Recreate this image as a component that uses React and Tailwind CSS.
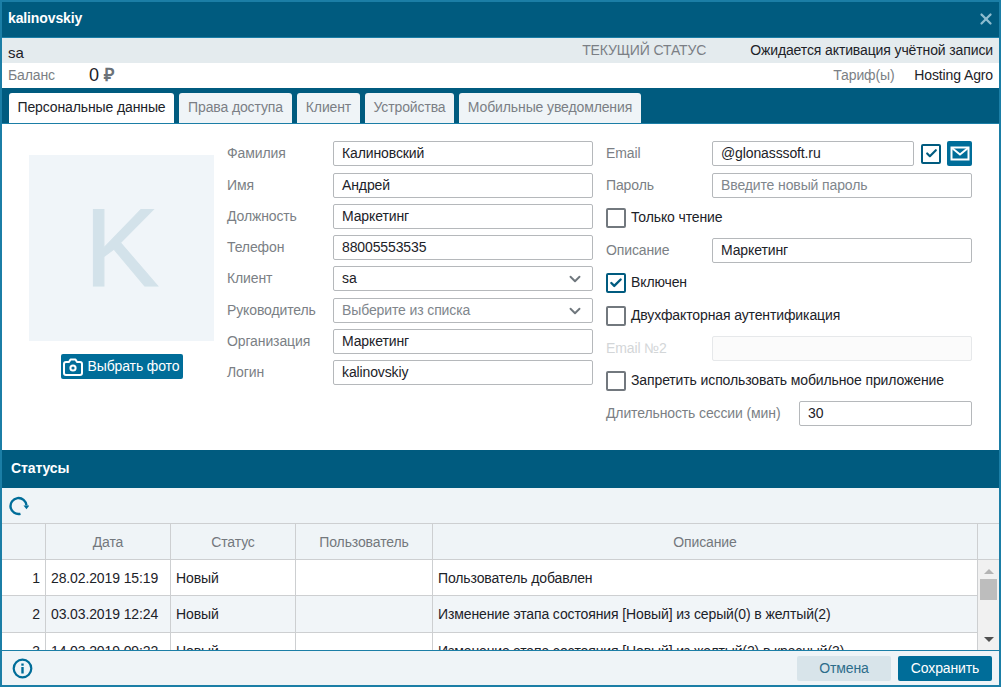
import React from "react";
import { Check, ChevronDown, X } from "lucide-react";

function Field({ label, value, placeholder, select, className = "", labelClass = "w-[106px]" }) {
  return (
    <div className={`flex items-center h-[25px] ${className}`}>
      <span className={`${labelClass} shrink-0 pb-[2px] text-[#7b7f85]`}>{label}</span>
      <div className="flex-1 h-[25px] border border-[#b5b8bb] rounded-[2px] bg-white flex items-center pl-2 pr-[8px] justify-between">
        <span className={`pb-[2px] ${value ? "text-[#1c2228]" : "text-[#80868c]"}`}>{value || placeholder}</span>
        {select && <ChevronDown size={18} strokeWidth={2.5} className="text-[#6f777d]" />}
      </div>
    </div>
  );
}

function Box({ checked, label, className = "" }) {
  return (
    <div className={`flex items-center gap-[5px] h-[20px] ${className}`}>
      <span className={`w-[20px] h-[20px] rounded-[2px] border-2 flex items-center justify-center ${checked ? "border-[#005b7f]" : "border-[#72787e]"}`}>
        {checked && <Check size={14} strokeWidth={4} className="text-[#005b7f]" />}
      </span>
      <span className="text-[#1c2228] pb-[2px]">{label}</span>
    </div>
  );
}

const cols = "grid grid-cols-[44px_125px_125px_137px_545px]";

function Row({ n, date, text, alt, h }) {
  const cell = "border-r border-[#cdcfd1] flex items-center pl-[5px] text-[#1c2228]";
  return (
    <div className={`${cols} ${h} shrink-0 border-b border-[#cdcfd1] ${alt ? "bg-[#f1f5f8]" : "bg-white"}`}>
      <div className="border-r border-[#cdcfd1] flex items-center justify-end pr-[5px] text-[#1c2228]">{n}</div>
      <div className={cell}>{date}</div>
      <div className={cell}>Новый</div>
      <div className={cell}></div>
      <div className={cell}>{text}</div>
    </div>
  );
}

function Tab({ active, w, children }) {
  return (
    <div className={`h-[30px] ${w} rounded-t-[3px] flex items-center justify-center pb-[2px] ${active ? "bg-white text-[#1c2228]" : "bg-[#eff4f7] text-[#7b7f85]"}`}>
      {children}
    </div>
  );
}

export default function App() {
  const head = "border-r border-[#cdcfd1] flex items-center justify-center text-[#73787d]";
  return (
    <div className="w-[1001px] h-[687px] overflow-hidden flex flex-col bg-white border-2 border-[#1b7ea6] text-[14px] leading-none tracking-[-0.12px] font-['Liberation_Sans',Arial,sans-serif]">
      <div className="h-[35px] shrink-0 bg-[#005b7f] flex items-center justify-between pl-[6px] pr-[4px]">
        <span className="text-white font-bold pb-[4px]">kalinovskiy</span>
        <X size={18} strokeWidth={3} className="text-[#8dbccf] mb-[2px]" />
      </div>
      <div className="h-[26px] shrink-0 bg-[#e4ebee] border-t border-[#1b7ea6] flex items-center pl-[6px] pr-[6px] justify-between">
        <span className="text-[#1c2228] text-[15px] pt-[4px]">sa</span>
        <div className="flex items-center pb-[2px]">
          <span className="text-[#7b7f85] w-[168px]">ТЕКУЩИЙ СТАТУС</span>
          <span className="text-[#1c2228]">Ожидается активация учётной записи</span>
        </div>
      </div>
      <div className="h-[25px] shrink-0 bg-white flex items-center pl-[6px] pr-[6px] justify-between pb-[2px]">
        <div className="flex items-center">
          <span className="text-[#7b7f85] w-[81px]">Баланс</span>
          <span className="text-[#1c2228] text-[18px]">0</span>
          <span className="text-[#6b7278] text-[18px] ml-[5px] font-bold">₽</span>
        </div>
        <div className="flex items-center">
          <span className="text-[#7b7f85] w-[81px]">Тариф(ы)</span>
          <span className="text-[#1c2228]">Hosting Agro</span>
        </div>
      </div>
      <div className="h-[35px] shrink-0 bg-[#005b7f] flex items-end gap-[5px] pl-[7px]">
        <Tab active w="w-[165px]">Персональные данные</Tab>
        <Tab w="w-[113px]">Права доступа</Tab>
        <Tab w="w-[63px]">Клиент</Tab>
        <Tab w="w-[89px]">Устройства</Tab>
        <Tab w="w-[182px]">Мобильные уведомления</Tab>
      </div>
      <div className="h-[327px] shrink-0 border-t border-[#1b7ea6] bg-white flex pl-[27px] pt-[17px]">
        <div className="w-[185px] shrink-0 flex flex-col items-center mt-[14px]">
          <div className="w-[185px] h-[186px] bg-[#f0f5f9] flex items-center justify-center text-[#d3e2ea] text-[112px] [-webkit-text-stroke:1px_#d3e2ea]">K</div>
          <div className="mt-[13px] w-[122px] h-[25px] bg-[#006d99] rounded-[2px] flex items-center text-white pl-[2px] gap-[5px]">
            <svg width="20" height="20" viewBox="0 0 20 20" fill="none" stroke="white" strokeWidth="2" strokeLinejoin="round">
              <path d="M3 5h3l1.5-2.5h5L14 5h3a2 2 0 0 1 2 2v9a2 2 0 0 1-2 2H3a2 2 0 0 1-2-2V7a2 2 0 0 1 2-2z" />
              <circle cx="10" cy="11" r="2.6" />
            </svg>
            <span className="pb-[2px]">Выбрать фото</span>
          </div>
        </div>
        <div className="w-[366px] shrink-0 ml-[13px] flex flex-col gap-[6px]">
          <Field label="Фамилия" value="Калиновский" />
          <Field label="Имя" value="Андрей" className="mt-[1px]" />
          <Field label="Должность" value="Маркетинг" />
          <Field label="Телефон" value="88005553535" />
          <Field label="Клиент" value="sa" select />
          <Field label="Руководитель" placeholder="Выберите из списка" select className="mt-[1px]" />
          <Field label="Организация" value="Маркетинг" />
          <Field label="Логин" value="kalinovskiy" />
        </div>
        <div className="w-[366px] shrink-0 ml-[13px] flex flex-col">
          <div className="flex items-center h-[25px]">
            <span className="w-[106px] shrink-0 pb-[2px] text-[#7b7f85]">Email</span>
            <div className="w-[202px] h-[25px] border border-[#b5b8bb] rounded-[2px] flex items-center pl-2 pb-[2px] text-[#1c2228]">@glonasssoft.ru</div>
            <span className="ml-[7px] w-[20px] h-[20px] rounded-[2px] border-2 border-[#005b7f] flex items-center justify-center">
              <Check size={13} strokeWidth={4} className="text-[#005b7f]" />
            </span>
            <span className="ml-[6px] w-[25px] h-[25px] rounded-[2px] bg-[#006d99] flex items-center justify-center">
              <svg width="20" height="15" viewBox="0 0 20 15" fill="none" stroke="white" strokeWidth="2">
                <rect x="1.5" y="1.5" width="17" height="12" />
                <path d="M2 2l8 6.5L18 2" />
              </svg>
            </span>
          </div>
          <Field label="Пароль" placeholder="Введите новый пароль" className="mt-[7px]" />
          <Box label="Только чтение" className="mt-[10px]" />
          <Field label="Описание" value="Маркетинг" className="mt-[10px]" />
          <Box checked label="Включен" className="mt-[10px]" />
          <Box label="Двухфакторная аутентификация" className="mt-[13px]" />
          <div className="flex items-center h-[25px] mt-[10px]">
            <span className="w-[106px] shrink-0 pb-[2px] text-[#d3d6d8]">Email №2</span>
            <div className="flex-1 h-[25px] border border-[#e6e8ea] rounded-[2px] bg-[#fbfbfb]"></div>
          </div>
          <Box label="Запретить использовать мобильное приложение" className="mt-[10px]" />
          <Field label="Длительность сессии (мин)" value="30" labelClass="w-[193px]" className="mt-[10px]" />
        </div>
      </div>
      <div className="h-[38px] shrink-0 bg-[#005b7f] flex items-center pl-[9px] pb-[2px]">
        <span className="text-white font-bold">Статусы</span>
      </div>
      <div className="h-[35px] shrink-0 bg-[#eff4f7] flex items-center pl-[7px]">
        <svg width="20" height="20" viewBox="0 0 20 20" fill="none">
          <path d="M11.5 17.8A8 8 0 1 1 17.5 9.5" stroke="#006d99" strokeWidth="2.4" />
          <path d="M14.5 9.5H20.5L17.5 13.2z" fill="#006d99" />
        </svg>
      </div>
      <div className="h-[127px] shrink-0 overflow-hidden flex flex-col">
        <div className="flex h-[37px] shrink-0 border-y border-[#cdcfd1] bg-[#eff4f7]">
          <div className={cols}>
            <div className={head}></div>
            <div className={head}>Дата</div>
            <div className={head}>Статус</div>
            <div className={head}>Пользователь</div>
            <div className={head}>Описание</div>
          </div>
        </div>
        <div className="flex min-h-0 flex-1">
          <div className="flex flex-col w-[976px] shrink-0">
            <Row n="1" date="28.02.2019 15:19" text="Пользователь добавлен" h="h-[36px]" />
            <Row n="2" date="03.03.2019 12:24" text="Изменение этапа состояния [Новый] из серый(0) в желтый(2)" alt h="h-[37px]" />
            <Row n="3" date="14.03.2019 09:22" text="Изменение этапа состояния [Новый] из желтый(2) в красный(3)" h="h-[36px]" />
          </div>
          <div className="flex-1 bg-[#f1f1f1] flex flex-col items-center pt-[9px] relative">
            <span className="w-0 h-0 border-x-[5px] border-x-transparent border-b-[5px] border-b-[#b4b4b4]"></span>
            <span className="mt-[5px] w-[17px] h-[21px] bg-[#bdbdbd]"></span>
            <span className="absolute top-[77px] w-0 h-0 border-x-[5px] border-x-transparent border-t-[5px] border-t-[#505050]"></span>
          </div>
        </div>
      </div>
      <div className="flex-1 min-h-0 border-t border-[#1b7ea6] bg-[#eff4f7] flex items-center justify-between pl-[10px] pr-[7px]">
        <svg width="21" height="21" viewBox="0 0 21 21" fill="none">
          <circle cx="10.5" cy="10.5" r="8.8" stroke="#006d99" strokeWidth="2.2" />
          <rect x="9.3" y="9" width="2.4" height="6.5" fill="#006d99" />
          <rect x="9.3" y="5.5" width="2.4" height="2.2" fill="#006d99" />
        </svg>
        <div className="flex gap-[7px]">
          <div className="w-[94px] h-[25px] bg-[#d8e4ea] rounded-[2px] flex items-center justify-center text-[#2d6d8a]">Отмена</div>
          <div className="w-[94px] h-[25px] bg-[#006d99] rounded-[2px] flex items-center justify-center text-white">Сохранить</div>
        </div>
      </div>
    </div>
  );
}
